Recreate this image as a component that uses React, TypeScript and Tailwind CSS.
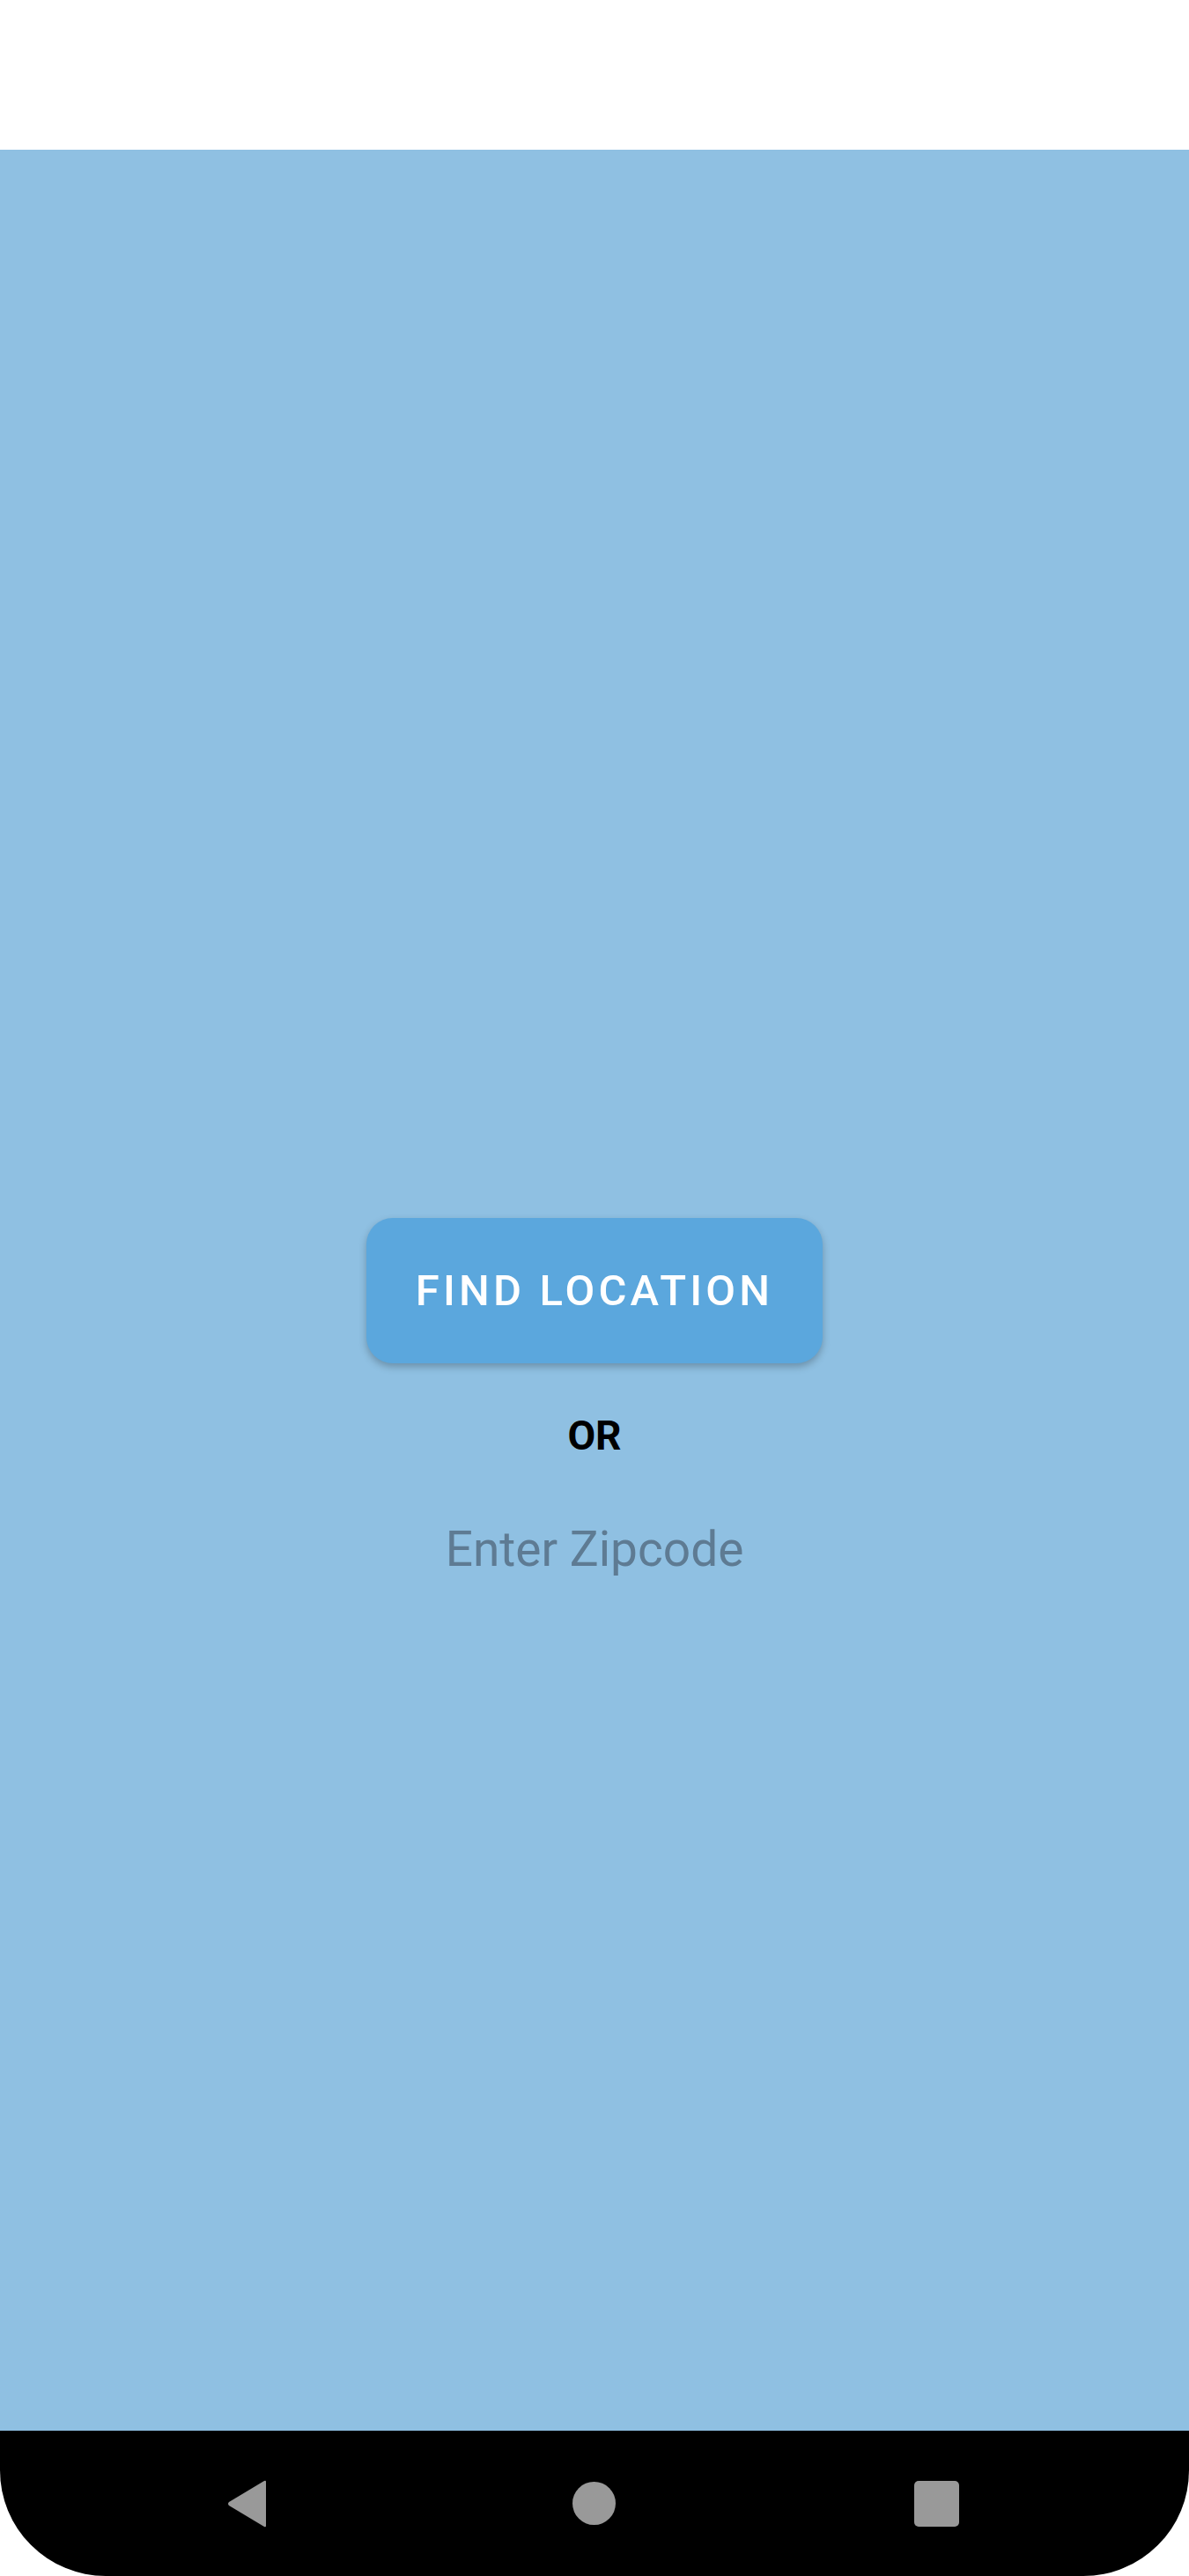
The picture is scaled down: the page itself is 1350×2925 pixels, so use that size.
export default function App() {
  return (
    <div className="w-[1350px] h-[2925px] flex flex-col bg-white font-['Roboto',sans-serif] overflow-hidden">
      <div className="h-[170px] bg-white" />
      <div className="flex-1 bg-[#8fc0e2] flex flex-col items-center pt-[1213px]">
        <button className="w-[518px] h-[165px] rounded-[30px] bg-[#5ba7dd] shadow-[0_4px_8px_rgba(0,0,0,0.25)] text-white text-[49px] font-medium tracking-[0.085em] leading-none">
          FIND LOCATION
        </button>
        <div className="mt-[55px] text-[46px] font-bold text-black leading-[54px]">OR</div>
        <input
          placeholder="Enter Zipcode"
          className="mt-[69px] w-[600px] text-center text-[55px] bg-transparent outline-none placeholder:text-[#5e7b93] leading-[66px]"
        />
      </div>
      <div className="h-[165px] bg-black rounded-b-[120px] flex items-center pl-[258px]">
        <svg width="46" height="54" viewBox="0 0 46 54">
          <path d="M44 2 L44 52 Q44 54 42 53 L2 29 Q0 27 2 25 L42 1 Q44 0 44 2 Z" fill="#999" />
        </svg>
        <div className="ml-[346px] w-[49px] h-[49px] rounded-full bg-[#999]" />
        <div className="ml-[339px] w-[51px] h-[52px] rounded-[5px] bg-[#999]" />
      </div>
    </div>
  );
}
